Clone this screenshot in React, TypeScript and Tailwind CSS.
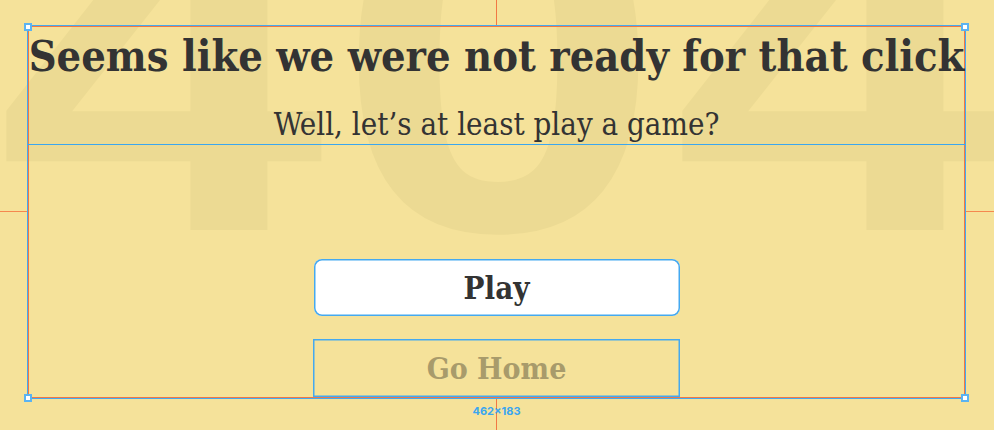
import React from "react";

const serif = { fontFamily: '"DejaVu Serif Condensed", "DejaVu Serif", serif' };

function Handle({ pos }: { pos: string }) {
  return <div className={`absolute w-[8px] h-[8px] bg-white border-2 border-[#5ab3f2] ${pos}`} />;
}

function Digit({ d }: { d: string }) {
  return <span className="w-[338px] text-center scale-x-[1.2]">{d}</span>;
}

export default function App() {
  return (
    <div className="relative w-[994px] h-[430px] overflow-hidden bg-[#f5e29a]">
      {/* big background 404 */}
      <div
        className="absolute left-[-8px] top-[-185px] flex w-[1014px] text-[490px] leading-none font-bold text-[#ecda93] select-none"
        style={{ fontFamily: '"Liberation Sans", Arial, sans-serif' }}
      >
        <Digit d="4" />
        <Digit d="0" />
        <Digit d="4" />
      </div>

      {/* guide lines of the design tool */}
      <div className="absolute left-[496px] top-0 w-px h-[26px] bg-[#f27844]" />
      <div className="absolute left-[496px] top-[398px] w-px h-[32px] bg-[#f27844]" />
      <div className="absolute left-0 top-[211px] w-[27px] h-px bg-[#f5884f]" />
      <div className="absolute left-[965px] top-[211px] w-[29px] h-px bg-[#f5884f]" />

      {/* selected frame with page content */}
      <div className="relative ml-[27px] mt-[25px] w-[939px] h-[374px] shadow-[inset_0_0_0_1px_#45a9f0] p-px flex flex-col">
        <div
          className="w-full h-full pt-px flex flex-col items-center shadow-[inset_0_0_0_1px_#f27844] text-[#333333]"
          style={serif}
        >
          <div className="w-full h-[118px] shrink-0 flex flex-col items-center pt-[8px] border-b border-[#3aa6f0]">
            <h1 className="text-[43px] leading-none font-bold whitespace-nowrap">
              Seems like we were not ready for that click
            </h1>
            <p className="mt-[31px] text-[31px] leading-none whitespace-nowrap">
              Well, let’s at least play a game?
            </p>
          </div>
          <button className="mt-[114px] w-[366px] h-[57px] shrink-0 flex items-center justify-center pt-[2px] bg-white rounded-[8px] shadow-[inset_0_0_0_1.5px_#45a9f0] text-[31px] leading-none font-bold text-[#333333]">
            Play
          </button>
          <div className="mt-[23px] w-[367px] h-[58px] shrink-0 flex items-center justify-center pt-[2px] shadow-[inset_0_0_0_1.5px_#45a9f0] text-[30px] leading-none font-bold text-[#a89b6b] cursor-pointer">
            Go Home
          </div>
        </div>

        <Handle pos="-left-[3px] -top-[2px]" />
        <Handle pos="-right-[3px] -top-[2px]" />
        <Handle pos="-left-[3px] -bottom-[3px]" />
        <Handle pos="-right-[3px] -bottom-[3px]" />
        <div
          className="absolute left-1/2 -translate-x-1/2 -bottom-[18px] h-[12px] text-[11px] leading-[12px] font-bold text-[#3aa6f0] whitespace-nowrap"
          style={{ fontFamily: 'Inter, "Liberation Sans", sans-serif' }}
        >
          462×183
        </div>
      </div>
    </div>
  );
}
